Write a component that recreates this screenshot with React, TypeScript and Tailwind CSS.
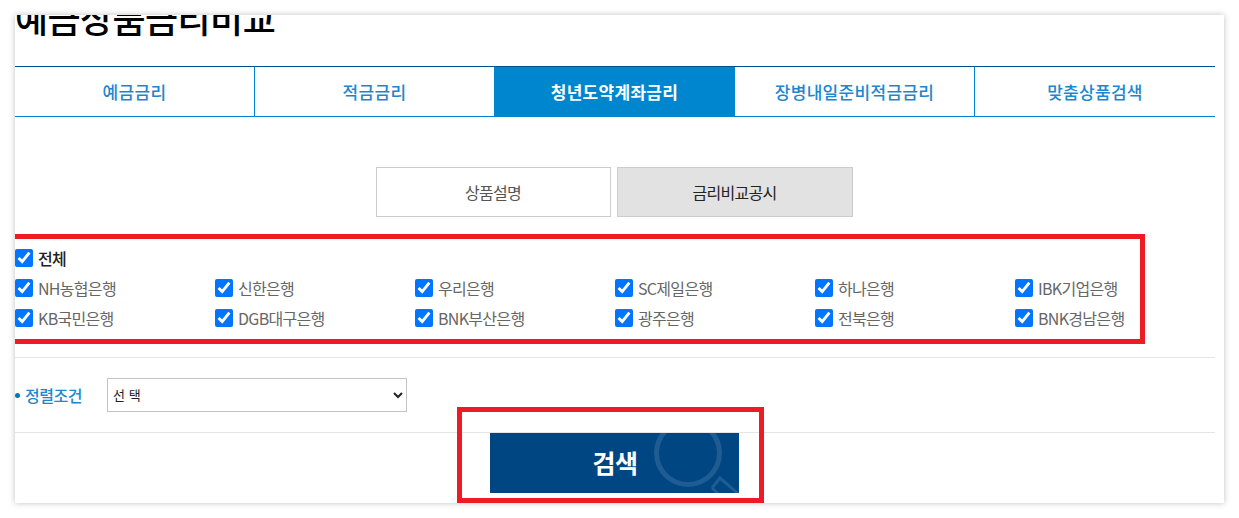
import React from 'react'

const tabs = ['예금금리', '적금금리', '청년도약계좌금리', '장병내일준비적금금리', '맞춤상품검색']
const banks = [
    'NH농협은행', '신한은행', '우리은행', 'SC제일은행', '하나은행', 'IBK기업은행',
    'KB국민은행', 'DGB대구은행', 'BNK부산은행', '광주은행', '전북은행', 'BNK경남은행',
]

function Check({ label, bold }: { label: string; bold?: boolean }) {
    return (
        <label className={`flex items-center gap-[5px] h-[30px] text-[16px] tracking-[-0.7px] ${bold ? 'font-medium text-[#222]' : 'text-[#666]'}`}>
            <input type="checkbox" defaultChecked className="w-[18px] h-[18px] m-0 shrink-0" />
            <span className="-mt-[1px]">{label}</span>
        </label>
    )
}

export default function App() {
    return (
        <div className="relative w-[1239px] h-[518px] bg-white overflow-hidden pt-[15px] pl-[15px]" style={{ fontFamily: '"Noto Sans CJK KR", "Noto Sans", sans-serif' }}>
            <div className="relative w-[1209px] h-[488px] bg-white shadow-[0_0_6px_rgba(0,0,0,0.25)] overflow-hidden">
                <div className="w-[1200px]">
                    {/* Title, cut off by the top of the card */}
                    <div className="h-[51px] flex items-end">
                        <h2 className="text-[36px] leading-[50px] mb-[24px] text-black font-medium tracking-[-0.6px] whitespace-nowrap">예금상품금리비교</h2>
                    </div>

                    {/* Tabs */}
                    <div className="flex h-[51px] border-t border-t-[#004f8f] border-b border-b-[#0086d1]">
                        {tabs.map((t, i) => (
                            <div
                                key={t}
                                className={`flex items-center justify-center text-[17px] tracking-[0.3px] ${i === 1 ? 'w-[239px]' : i === 2 ? 'w-[241px]' : 'w-[240px]'} ${i === 2 ? 'bg-[#0086cf] text-white font-bold' : 'text-[#1b87d0] font-medium'} ${i === 0 || i === 3 ? 'border-r border-r-[#0086d1]' : ''}`}
                            >
                                {t}
                            </div>
                        ))}
                    </div>

                    {/* Sub tabs */}
                    <div className="flex justify-center gap-[6px] mt-[50px] pr-[2px]">
                        <div className="w-[235px] h-[50px] border border-[#ccc] flex items-center justify-center text-[16px] tracking-[-0.7px] text-[#555]">상품설명</div>
                        <div className="w-[236px] h-[50px] border border-[#ccc] bg-[#e2e2e2] flex items-center justify-center text-[16px] tracking-[-0.7px] text-[#222]">금리비교공시</div>
                    </div>

                    {/* Bank checkboxes */}
                    <div className="mt-[26px]">
                        <Check label="전체" bold />
                        <div className="grid grid-cols-6">
                            {banks.map((b) => <Check key={b} label={b} />)}
                        </div>
                    </div>

                    {/* Sort */}
                    <div className="mt-[24px] h-[76px] border-y border-[#e5e5e5] flex items-center">
                        <span className="w-[92px] flex items-center gap-[5px] text-[16px] font-medium tracking-[-0.5px] text-[#1b87d0]">
                            <span className="w-[5px] h-[5px] rounded-full bg-[#0076c0]" />
                            <span className="-mt-[1px]">정렬조건</span>
                        </span>
                        <select className="w-[300px] h-[34px] border border-[#c4c4c4] bg-white text-[13px] text-[#222] tracking-[0.5px] pl-[1px] pb-[1px]">
                            <option>선 택</option>
                        </select>
                    </div>

                    {/* Search button */}
                    <div className="flex justify-center pr-[2px]">
                        <button className="relative w-[249px] h-[60px] bg-[#004683] overflow-hidden text-white text-[25px] font-bold tracking-[-0.5px] flex items-center justify-center">
                            <svg className="absolute left-[160px] top-0" width="89" height="60" viewBox="0 0 89 60" fill="none" stroke="#ffffff" strokeOpacity="0.12">
                                <circle cx="38" cy="20" r="31.5" strokeWidth="5" />
                                <path d="M62 55 L70 45 L92 64 M62 55 L74 66" strokeWidth="3" />
                            </svg>
                            <span className="relative ml-[2px] -mt-[1px]">검색</span>
                        </button>
                    </div>
                </div>

                {/* Red annotation boxes */}
                <div className="absolute left-[-25px] top-[219px] w-[1155px] h-[110px] border-[5px] border-[#ed1c24] pointer-events-none" />
                <div className="absolute left-[442px] top-[392px] w-[307px] h-[96px] border-[5px] border-[#ed1c24] pointer-events-none" />
            </div>
        </div>
    )
}
